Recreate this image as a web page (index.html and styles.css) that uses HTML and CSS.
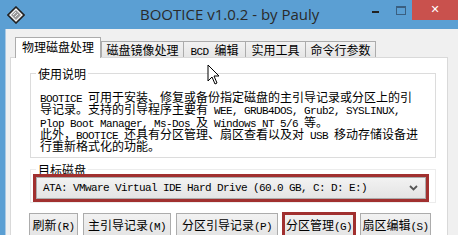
FILE: index.html
```html
<!DOCTYPE html>
<html>
<head>
<meta charset="utf-8">
<link rel="stylesheet" href="styles.css">
</head>
<body>
<div class="window">
  <div class="titlebar">
    <svg class="appicon" width="18" height="18" viewBox="0 0 18 18">
      <polygon points="9,1 17,9 9,17 1,9" fill="#f4f4f4" stroke="#222" stroke-width="1.6"/>
      <polygon points="9,4 14,9 9,14 4,9" fill="#9a9a9a"/>
      <line x1="6" y1="9" x2="9" y2="6" stroke="#eee" stroke-width="1"/>
      <line x1="8" y1="11" x2="11" y2="8" stroke="#eee" stroke-width="1"/>
    </svg>
    <div class="title">BOOTICE v1.0.2 - by Pauly</div>
    <div class="controls">
      <div class="ctl min"></div>
      <div class="ctl max"></div>
      <div class="ctl close">✕</div>
    </div>
  </div>
  <div class="frame">
    <div class="edge"></div>
    <div class="client">
      <div class="tabs">
        <div class="tab active">物理磁盘处理</div>
        <div class="tab t2">磁盘镜像处理</div>
        <div class="tab t3"><span class="m">BCD </span>编辑</div>
        <div class="tab t4">实用工具</div>
        <div class="tab t5">命令行参数</div>
      </div>
      <div class="panel">
        <fieldset class="group g1">
          <legend>使用说明</legend>
          <div class="desc">
            <div class="ln"><span class="m">BOOTICE </span>可用于安装、修复或备份指定磁盘的主引导记录或分区上的引</div>
            <div class="ln">导记录。支持的引导程序主要有<span class="m"> WEE, GRUB4DOS, Grub2, SYSLINUX,</span></div>
            <div class="ln"><span class="m">Plop Boot Manager, Ms-Dos </span>及<span class="m"> Windows NT 5/6 </span>等。</div>
            <div class="ln">此外，<span class="m">BOOTICE </span>还具有分区管理、扇区查看以及对<span class="m"> USB </span>移动存储设备进</div>
            <div class="ln">行重新格式化的功能。</div>
          </div>
        </fieldset>
        <fieldset class="group g2">
          <legend>目标磁盘</legend>
          <div class="combo">
            <span class="m">ATA: VMware Virtual IDE Hard Drive (60.0 GB, C: D: E:)</span>
            <svg class="chev" width="9" height="6" viewBox="0 0 9 6"><polyline points="1,1 4.5,4.5 8,1" fill="none" stroke="#555" stroke-width="1.8"/></svg>
          </div>
        </fieldset>
        <div class="buttons">
          <div class="btn b1">刷新<span class="m">(R)</span></div>
          <div class="btn b2">主引导记录<span class="m">(M)</span></div>
          <div class="btn b3">分区引导记录<span class="m">(P)</span></div>
          <div class="btn b4 hl">分区管理<span class="m">(G)</span></div>
          <div class="btn b5">扇区编辑<span class="m">(S)</span></div>
        </div>
      </div>
    </div>
  </div>
  <svg class="cursor" width="14" height="22" viewBox="0 0 14 22">
    <polygon points="1,1 1,17 5,13 8,20 10,19 7,12 12,12" fill="#fff" stroke="#000" stroke-width="1" stroke-linejoin="round"/>
  </svg>
</div>
</body>
</html>
```
FILE: styles.css
```css
html, body {
  margin: 0;
  padding: 0;
}
body {
  width: 458px;
  height: 235px;
  overflow: hidden;
  background: #f0f0f0;
  font-family: "Noto Sans CJK SC", "Liberation Mono", sans-serif;
  font-size: 12px;
  color: #000;
}
.window {
  position: relative;
  width: 458px;
  height: 235px;
  display: flex;
  flex-direction: column;
}
.titlebar {
  height: 29px;
  flex: none;
  background: #5b9fd3;
  display: flex;
  align-items: flex-start;
}
.appicon {
  margin: 6px 0 0 7px;
}
.title {
  margin: 4px 0 0 115px;
  font-family: "Open Sans", "Noto Sans", sans-serif;
  font-size: 15px;
  line-height: 20px;
  color: #2a2a2a;
  white-space: nowrap;
}
.controls {
  margin-left: auto;
  display: flex;
  align-items: flex-start;
}
.ctl.min {
  width: 7px;
  height: 2px;
  background: #222;
  margin: 11px 0 0 0;
}
.ctl.max {
  width: 8px;
  height: 6px;
  border: 1px solid #3a5f80;
  border-top-width: 2px;
  margin: 6px 0 0 17px;
}
.ctl.close {
  width: 46px;
  height: 20px;
  margin-left: 6px;
  background: #c9514d;
  color: #fff;
  font-family: "DejaVu Sans", sans-serif;
  font-size: 11px;
  line-height: 20px;
  text-align: center;
  font-weight: bold;
}
.frame {
  flex: 1;
  display: flex;
}
.edge {
  width: 5px;
  background: #5b9fd3;
  border-right: 1px solid #a9c9e4;
}
.client {
  flex: 1;
  display: flex;
  flex-direction: column;
  padding-left: 4px;
}
.m {
  font-family: "Liberation Mono", "DejaVu Sans Mono", monospace;
  font-size: 11px;
  letter-spacing: -0.6px;
}
.tabs {
  height: 29px;
  display: flex;
  align-items: flex-end;
  padding-left: 5px;
  position: relative;
  z-index: 1;
}
.tab {
  box-sizing: border-box;
  height: 16px;
  border: 1px solid #acacac;
  border-bottom: none;
  background: linear-gradient(#f2f2f2, #e6e6e6);
  margin-left: -1px;
  text-align: center;
  line-height: 15px;
  white-space: nowrap;
  margin-bottom: 1px;
}
.tab.active {
  height: 21px;
  width: 86px;
  background: #fff;
  margin-left: 0;
  margin-bottom: 0;
  line-height: 18px;
  border-color: #acacac;
  z-index: 2;
}
.tab.t2 { width: 83px; margin-left: 0; }
.tab.t3 { width: 63px; }
.tab.t4 { width: 61px; }
.tab.t5 { width: 71px; }
.panel {
  flex: 1;
  margin-right: 10px;
  margin-top: -1px;
  background: #fff;
  border: 1px solid #d9d9d9;
  border-bottom: none;
  padding: 9px 11px 0 19px;
  display: flex;
  flex-direction: column;
}
.group {
  margin: 0;
  padding: 0;
  border: 1px solid #dcdcdc;
  min-width: 0;
}
.group legend {
  margin-left: 5px;
  padding: 0 2px;
  line-height: 13px;
  font-size: 12px;
}
.g1 {
  height: 91px;
  box-sizing: border-box;
}
.desc {
  padding: 11px 0 0 9px;
  white-space: nowrap;
}
.ln {
  height: 12.3px;
  line-height: 12px;
}
.g2 {
  margin-top: 5px;
  height: 40px;
  box-sizing: border-box;
  border-color: #ececec;
}
.combo {
  box-sizing: border-box;
  margin: 1px 9px 0 5px;
  height: 22px;
  border: 1px solid #acacac;
  background: linear-gradient(#f2f2f2, #e4e4e4);
  outline: 3px solid #a1302f;
  display: flex;
  align-items: center;
  padding-left: 6px;
}
.chev {
  margin-left: auto;
  margin-right: 7px;
}
.buttons {
  margin-top: 10px;
  display: flex;
  gap: 5px;
  margin-left: -1px;
}
.btn {
  box-sizing: border-box;
  height: 24px;
  border: 1px solid #acacac;
  background: linear-gradient(#f2f2f2, #e4e4e4);
  text-align: center;
  line-height: 22px;
  white-space: nowrap;
}
.b1 { width: 49px; }
.b2 { width: 88px; }
.b3 { width: 102px; }
.b4 { width: 72px; }
.b5 { width: 71px; }
.btn.hl {
  outline: 3px solid #a1302f;
  outline-offset: -2px;
}
.cursor {
  position: absolute;
  left: 207px;
  top: 64px;
}
```
